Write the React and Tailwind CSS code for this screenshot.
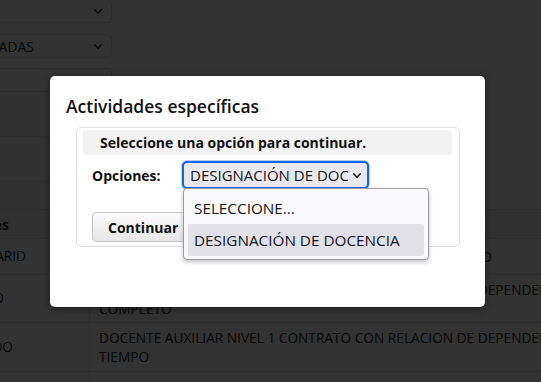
import React from 'react'

const rows = [
  { left: 'SOLIDARID', pr: 'pr-[63px]', h: 'h-[36px]', lines: ['DOCENTE AUXILIAR NIVEL 1 NOMBRAMIENTO MEDIO TIEMPO'] },
  { left: 'CONTRATADO', pr: 'pr-[85px]', h: 'h-[48px]', lines: ['DOCENTE AUXILIAR NIVEL 1 CONTRATO CON RELACION DE DEPENDENCIA TIEMPO', 'COMPLETO'] },
  { left: 'CONTRATADO DO', pr: 'pr-[76px]', h: 'h-[49px]', lines: ['DOCENTE AUXILIAR NIVEL 1 CONTRATO CON RELACION DE DEPENDENCIA MEDIO', 'TIEMPO'] },
  { left: 'OCASIONAL', pr: 'pr-[76px]', h: 'h-[49px]', lines: ['DOCENTE AUXILIAR NIVEL 1 CONTRATO SIN RELACION DE DEPENDENCIA'] },
]

const Chevron = ({ className }) => (
  <svg viewBox="0 0 12 8" className={className} fill="none" stroke="currentColor" strokeWidth="1.8" strokeLinecap="round" strokeLinejoin="round">
    <path d="M2 2l4 4 4-4" />
  </svg>
)

const App = () => {
  return (
    <div className="relative w-[541px] h-[382px] overflow-hidden bg-white font-['Open_Sans',sans-serif] text-[#212529]">
      {/* page behind the modal */}
      <div className="w-[900px] -mt-px">
        <div className="flex flex-col w-[112px]">
          <div className="-ml-[100px] w-[212px] h-[24px] flex items-center justify-end pr-[8px] border border-[#cfd4da] rounded-[5px]">
            <Chevron className="w-[10px] h-[7px] text-[#333]" />
          </div>
          <div className="mt-[11px] -ml-[100px] w-[212px] h-[24px] flex items-center border border-[#cfd4da] rounded-[5px] text-[14px]">
            <div className="flex-1 flex justify-end overflow-hidden whitespace-nowrap pr-[59px]">ACTIVIDADES REGISTRADAS</div>
            <Chevron className="w-[10px] h-[7px] mr-[8px] text-[#333]" />
          </div>
          <div className="mt-[10px] -ml-[100px] w-[212px] h-[24px] border border-[#cfd4da] rounded-[5px]" />
          <div className="h-[45px] border-b border-[#e6e6e6] bg-[#f9f9f9]" />
          <div className="h-[45px] border-b border-[#e6e6e6] bg-[#f9f9f9]" />
          <div className="h-[27px] bg-[#f9f9f9]" />
        </div>

        <div className="flex h-[30px] border-y border-[#dee2e6] bg-[#f6f6f6] text-[14px] font-bold">
          <div className="w-[90px] flex items-center justify-end pr-[81px] overflow-hidden whitespace-nowrap">Modalidades</div>
          <div className="flex-1 flex items-center pl-[9px]">Descripción</div>
        </div>
        {rows.map((row, i) => (
          <div key={i} className={`flex ${row.h} border-b border-[#dee2e6] text-[13.7px]`}>
            <div className={`w-[90px] shrink-0 flex items-center justify-end ${row.pr} overflow-hidden whitespace-nowrap border-r border-[#dee2e6]`}>{row.left}</div>
            <div className="flex-1 flex flex-col justify-center pl-[9px] leading-[19px] whitespace-nowrap">
              {row.lines.map((l, k) => <span key={k}>{l}</span>)}
            </div>
          </div>
        ))}
      </div>

      {/* modal */}
      <div className="absolute inset-0 bg-black/80">
        <div className="ml-[50px] mt-[76px] w-[435px] h-[231px] rounded-[5px] bg-white shadow-[0_2px_8px_rgba(0,0,0,0.4)] text-[#111]">
          <h2 className="pl-[16px] pt-[17px] text-[17.5px] font-semibold leading-[26px]">Actividades específicas</h2>
          <div className="mt-[8px] ml-[26px] w-[384px] h-[120px] border border-[#dedede] rounded-[5px] pt-[2px] pl-[6px] pr-[7px]">
            <div className="h-[25px] rounded-[4px] bg-[#f2f2f2] flex items-center pl-[17px] text-[14px] font-bold">
              Seleccione una opción para continuar.
            </div>
            <div className="mt-[6px] flex items-center">
              <span className="w-[99px] pl-[9px] text-[14px] font-bold">Opciones:</span>
              <div className="relative">
                <div className="w-[187px] h-[28px] rounded-[5px] border-2 border-[#1466e0] ring-1 ring-[#b9d2f7] bg-[#e9e9ed] flex items-center pl-[6px] pr-[5px] text-[15px] text-[#15141a]">
                  <span className="flex-1 overflow-hidden whitespace-nowrap">DESIGNACIÓN DE DOCENCIA</span>
                  <Chevron className="w-[10px] h-[7px] ml-[4px] text-[#15141a]" />
                </div>
                <div className="absolute left-[1px] top-[27px] w-[246px] h-[72px] z-10 rounded-[4px] border border-[#9a9a9f] bg-[#f9f9fb] shadow-[0_2px_4px_rgba(0,0,0,0.25)] px-[4px] py-[3px] text-[15.3px] text-[#15141a]">
                  <div className="h-[32px] flex items-center pl-[6px]">SELECCIONE...</div>
                  <div className="h-[32px] flex items-center pl-[6px] bg-[#e0e0e6] rounded-[2px]">DESIGNACIÓN DE DOCENCIA</div>
                </div>
              </div>
            </div>
            <div className="mt-[23px] pl-[9px] flex gap-[8px]">
              <button className="h-[30px] px-[15px] rounded-[4px] border border-[#c4c4c4] bg-gradient-to-b from-[#fbfbfb] to-[#e6e6e6] text-[14px] font-bold text-[#111]">Continuar</button>
              <button className="h-[30px] px-[15px] rounded-[4px] border border-[#c4c4c4] bg-gradient-to-b from-[#fbfbfb] to-[#e6e6e6] text-[14px] font-bold text-[#111]">Cancelar</button>
            </div>
          </div>
        </div>
      </div>
    </div>
  )
}

export default App
